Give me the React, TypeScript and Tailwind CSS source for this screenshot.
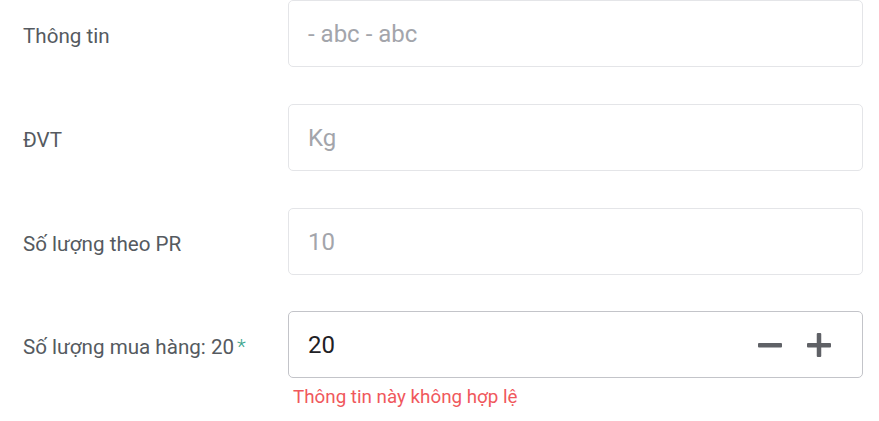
import React from "react";

const Field: React.FC<{ label: string; value: string }> = ({ label, value }) => (
  <div className="flex items-center">
    <div className="w-[288px] shrink-0 pl-[23px] pt-[5px] text-[20.6px] text-[#555a60]">
      {label}
    </div>
    <div className="w-[575px] h-[67px] flex items-center px-[19px] border border-[#e4e5e8] rounded-[5px] text-[24px] text-[#a3a5ab]">
      {value}
    </div>
  </div>
);

const App: React.FC = () => {
  return (
    <div
      className="w-[879px] h-[421px] bg-white flex flex-col gap-[37px]"
      style={{ fontFamily: "Roboto, 'Liberation Sans', sans-serif" }}
    >
      <Field label="Thông tin" value="- abc - abc" />
      <Field label="ĐVT" value="Kg" />
      <Field label="Số lượng theo PR" value="10" />

      {/* Quantity with stepper */}
      <div className="flex items-start -mt-px">
        <div className="w-[288px] h-[67px] shrink-0 pl-[23px] pt-[5px] flex items-center text-[20.6px] text-[#555a60]">
          Số lượng mua hàng: 20
          <span className="text-[#3aa58c] ml-[3px] font-light">*</span>
        </div>
        <div className="flex flex-col">
          <div className="w-[575px] h-[67px] flex items-center pl-[19px] pr-[31px] border border-[#c3c4c9] rounded-[5px]">
            <span className="flex-1 text-[24px] text-[#1f2125]">20</span>
            <div className="flex items-center gap-[25px] text-[#5f6166]">
              <svg width="24" height="24" viewBox="0 0 24 24">
                <rect x="0" y="10" width="24" height="4.5" rx="1" fill="currentColor" />
              </svg>
              <svg width="24" height="24" viewBox="0 0 24 24">
                <rect x="0" y="10" width="24" height="4.5" rx="1" fill="currentColor" />
                <rect x="9.75" y="0" width="4.5" height="24" rx="1" fill="currentColor" />
              </svg>
            </div>
          </div>
          <div className="pl-[5px] mt-[5px] text-[18.8px] text-[#f0585c]">
            Thông tin này không hợp lệ
          </div>
        </div>
      </div>
    </div>
  );
};

export default App;
